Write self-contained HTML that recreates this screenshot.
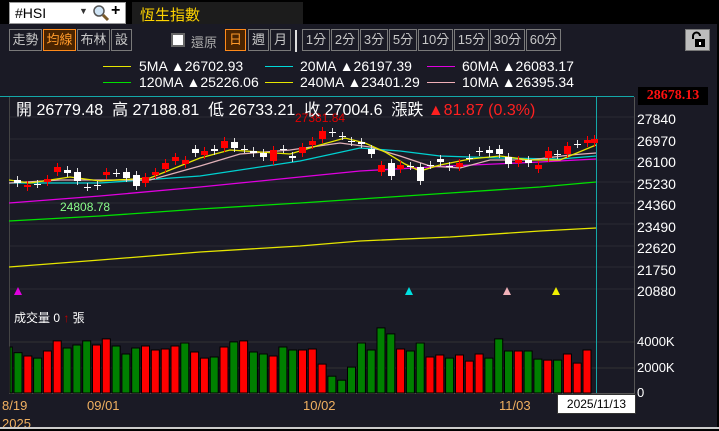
<!DOCTYPE html>
<html><head><meta charset="utf-8"><style>
*{margin:0;padding:0;box-sizing:border-box}
body{width:719px;height:429px;background:#000;overflow:hidden;font-family:"Liberation Sans","Noto Sans CJK TC",sans-serif;position:relative}
.main{position:absolute;left:0;top:24px;width:717px;height:405px;background:#1a1a25}
.a{position:absolute;white-space:nowrap}
.btn{position:absolute;top:29px;height:22px;border:1px solid #7a7a7a;color:#c8c8c8;font-size:13px;line-height:20px;text-align:center;font-family:"Liberation Sans","Noto Sans CJK TC",sans-serif}
.on{border-color:#ff8a1a;background:#4a2400;color:#ff9a2a}
.lg{position:absolute;height:1px}
.lt{position:absolute;color:#fff;font-size:14px;line-height:14px}
</style></head><body>
<div class="main"></div>
<div class="a" style="left:9px;top:2px;width:117px;height:22px;background:#fff;border:1px solid #999"></div>
<div class="a" style="left:15px;top:5px;font-size:14px;color:#000">#HSI</div>
<div class="a" style="left:79px;top:6px;font-size:9px;color:#333">▼</div>
<svg class="a" style="left:92px;top:4px" width="18" height="18"><circle cx="7" cy="7" r="5" fill="#cfe4f5" stroke="#555" stroke-width="1.5"/><path d="M11 11 L16 16" stroke="#7a5a2a" stroke-width="3"/></svg>
<div class="a" style="left:111px;top:2px;font-size:16px;font-weight:bold;color:#000">+</div>
<div class="a" style="left:132px;top:2px;width:171px;height:22px;background:#1c1c1c"></div>
<div class="a" style="left:140px;top:4px;font-size:15px;color:#ffd400">恆生指數</div>

<div class="btn" style="left:9px;width:33px">走勢</div>
<div class="btn on" style="left:43px;width:33px">均線</div>
<div class="btn" style="left:77px;width:33px">布林</div>
<div class="btn" style="left:111px;width:21px">設</div>
<div class="a" style="left:171px;top:33px;width:14px;height:14px;background:#fff;border:2px solid #666"></div>
<div class="a" style="left:191px;top:32px;font-size:13px;color:#aaa">還原</div>
<div class="btn on" style="left:225px;width:21px">日</div>
<div class="btn" style="left:248px;width:21px">週</div>
<div class="btn" style="left:270px;width:21px">月</div>
<div class="a" style="left:295px;top:30px;width:2px;height:22px;background:#ddd"></div>
<div class="btn" style="left:302px;width:28px">1分</div>
<div class="btn" style="left:331px;width:28px">2分</div>
<div class="btn" style="left:360px;width:28px">3分</div>
<div class="btn" style="left:389px;width:28px">5分</div>
<div class="btn" style="left:418px;width:35px">10分</div>
<div class="btn" style="left:454px;width:35px">15分</div>
<div class="btn" style="left:490px;width:35px">30分</div>
<div class="btn" style="left:526px;width:35px">60分</div>
<div class="a" style="left:685px;top:29px;width:25px;height:22px;background:#bdbdbd;border:1px solid #777"></div>
<svg class="a" style="left:690px;top:31px" width="16" height="18"><path d="M3 8 V5 A3.5 3.5 0 0 1 10 5" stroke="#000" stroke-width="2" fill="none"/><rect x="5" y="8" width="10" height="8" fill="#000"/><rect x="9" y="11" width="2" height="3" fill="#fff"/></svg>

<div class="lg" style="left:103px;top:66px;width:28px;background:#e6e600"></div><div class="lt" style="left:139px;top:59px">5MA ▲26702.93</div>
<div class="lg" style="left:265px;top:66px;width:28px;background:#00d8d8"></div><div class="lt" style="left:300px;top:59px">20MA ▲26197.39</div>
<div class="lg" style="left:427px;top:66px;width:28px;background:#e000e0"></div><div class="lt" style="left:462px;top:59px">60MA ▲26083.17</div>
<div class="lg" style="left:103px;top:82px;width:28px;background:#00e000"></div><div class="lt" style="left:139px;top:75px">120MA ▲25226.06</div>
<div class="lg" style="left:265px;top:82px;width:28px;background:#e6e600"></div><div class="lt" style="left:300px;top:75px">240MA ▲23401.29</div>
<div class="lg" style="left:427px;top:82px;width:28px;background:#f0b0b8"></div><div class="lt" style="left:462px;top:75px">10MA ▲26395.34</div>

<div class="a" style="left:638px;top:87px;width:70px;height:18px;background:#000;color:#ff1010;font-weight:bold;font-size:14px;line-height:18px;text-align:center;font-family:'Liberation Serif',serif">28678.13</div>

<svg class="a" style="left:0;top:0" width="719" height="429">
<g stroke="#2a2a32" stroke-width="1">
<line x1="9" y1="117" x2="634" y2="117"/><line x1="9" y1="139" x2="634" y2="139"/><line x1="9" y1="160" x2="634" y2="160"/><line x1="9" y1="182" x2="634" y2="182"/><line x1="9" y1="203" x2="634" y2="203"/><line x1="9" y1="224" x2="634" y2="224"/><line x1="9" y1="246" x2="634" y2="246"/><line x1="9" y1="267" x2="634" y2="267"/><line x1="9" y1="289" x2="634" y2="289"/>
<line x1="9" y1="342" x2="634" y2="342" stroke="#333"/><line x1="9" y1="368" x2="634" y2="368" stroke="#333"/>
</g>
<line x1="9.5" y1="97" x2="9.5" y2="393" stroke="#444"/>
<line x1="634.5" y1="97" x2="634.5" y2="395" stroke="#555"/>
<line x1="9" y1="393.5" x2="634" y2="393.5" stroke="#555"/>
<line x1="0" y1="96.5" x2="634" y2="96.5" stroke="#14a8a8"/>
<line x1="596.5" y1="96" x2="596.5" y2="393" stroke="#14a8a8"/>
<g fill="none" stroke-width="1.3">
<polyline stroke="#e6e600" points="9,267 100,260 200,252 300,246 360,241 450,237 540,231 596,228"/>
<polyline stroke="#00e000" points="9,221 100,216 200,209 300,203 360,199 450,193 540,187 596,182"/>
<polyline stroke="#e000e0" points="9,203 100,196 200,187 300,177 360,171 450,166 540,162 596,159"/>
<polyline stroke="#00d0d0" points="9,183 100,183 200,176 300,161 360,148 400,151 440,156 500,158 560,159 596,156"/>
<polyline stroke="#e0b0b8" points="9,183 60,180 100,180 150,180 200,166 240,154 290,150 340,143 370,147 400,156 430,166 460,168 490,160 530,160 570,155 596,153"/>
<polyline stroke="#e6e600" points="9,180 30,183 70,177 100,181 150,178 200,158 230,150 290,154 320,145 345,138 365,143 385,152 405,164 420,171 440,165 470,159 500,156 530,160 560,160 596,145"/>
</g>
<text x="295" y="122" fill="#e00000" font-size="12" font-family="Liberation Sans">27381.84</text>
<text x="60" y="211" fill="#8aff8a" font-size="12" font-family="Liberation Sans">24808.78</text>
<polygon points="14,295 18,287 22,295" fill="#e000e0"/>
<polygon points="405,295 409,287 413,295" fill="#00e0e0"/>
<polygon points="503,295 507,287 511,295" fill="#f0b0b8"/>
<polygon points="552,295 556,287 560,295" fill="#f0f000"/>
</svg>
<svg class="a" style="left:0;top:0" width="719" height="429" id="cs"></svg>

<div class="a" style="left:16px;top:96px;font-size:16px;color:#fff">開 26779.48&nbsp; 高 27188.81&nbsp; 低 26733.21&nbsp; 收 27004.6&nbsp; 漲跌 <span style="color:#ff2020">▲81.87 (0.3%)</span></div>
<div class="a" style="left:637px;top:109px;font-size:14px;color:#fff;line-height:21.5px">27840<br>26970<br>26100<br>25230<br>24360<br>23490<br>22620<br>21750<br>20880</div>
<div class="a" style="left:637px;top:334px;font-size:13px;color:#fff">4000K</div>
<div class="a" style="left:637px;top:360px;font-size:13px;color:#fff">2000K</div>
<div class="a" style="left:637px;top:385px;font-size:13px;color:#fff">0</div>
<div class="a" style="left:14px;top:309px;font-size:12px;color:#fff">成交量 0 <span style="color:#c00000">↑</span> 張</div>
<div class="a" style="left:2px;top:398px;font-size:13px;color:#f0b060">8/19</div>
<div class="a" style="left:2px;top:416px;font-size:13px;color:#f0b060">2025</div>
<div class="a" style="left:87px;top:398px;font-size:13px;color:#f0b060">09/01</div>
<div class="a" style="left:303px;top:398px;font-size:13px;color:#f0b060">10/02</div>
<div class="a" style="left:499px;top:398px;font-size:13px;color:#f0b060">11/03</div>
<div class="a" style="left:557px;top:394px;width:79px;height:20px;background:#fff;border:1px solid #333;color:#000;font-size:12px;line-height:18px;text-align:center">2025/11/13</div>
<div class="a" style="left:0;top:427px;width:719px;height:2px;background:#ccc"></div>
<script>
var s='';
var vol=[[140,'G'],[157,'G'],[167,'R'],[173,'G'],[152,'R'],[122,'R'],[143,'G'],[134,'G'],[122,'G'],[134,'R'],[116,'R'],[137,'G'],[161,'G'],[143,'G'],[137,'R'],[149,'R'],[146,'R'],[137,'R'],[128,'G'],[155,'R'],[173,'R'],[170,'G'],[140,'R'],[125,'G'],[122,'R'],[155,'G'],[161,'G'],[167,'R'],[140,'G'],[149,'G'],[149,'R'],[146,'R'],[191,'R'],[227,'G'],[239,'G'],[200,'G'],[128,'G'],[149,'G'],[83,'G'],[101,'G'],[146,'R'],[152,'G'],[128,'G'],[170,'R'],[164,'R'],[173,'G'],[164,'R'],[182,'R'],[161,'R'],[173,'G'],[116,'G'],[152,'G'],[152,'R'],[152,'G'],[176,'G'],[179,'R'],[179,'G'],[161,'R'],[188,'R'],[149,'R']];
for(var i=0;i<vol.length;i++){var x=14+(i-1)*9.81;var y=300+vol[i][0]/2.98;var w=8;if(x<10){w-=10-x;x=10;}
s+='<rect x="'+x.toFixed(1)+'" y="'+y.toFixed(1)+'" width="'+w.toFixed(1)+'" height="'+(393-y).toFixed(1)+'" fill="'+(vol[i][1]=='R'?'#ff0000':'#008000')+'" stroke="#000" stroke-width="1"/>';}
var c=[[17,180,183,'W'],[27,185,187,'R'],[37,184,184,'W'],[47,179,182,'R'],[57,167,172,'R'],[67,170,173,'W'],[77,172,181,'W'],[87,187,187,'W'],[97,185,186,'W'],[106,172,175,'R'],[116,173,173,'W'],[126,172,178,'W'],[136,175,186,'W'],[145,177,183,'R'],[155,172,175,'R'],[165,163,169,'R'],[175,157,161,'R'],[185,160,164,'R'],[195,149,153,'W'],[204,151,155,'R'],[214,149,151,'W'],[224,141,148,'R'],[234,142,148,'W'],[244,149,149,'W'],[253,151,153,'W'],[263,153,157,'W'],[273,150,161,'R'],[283,149,149,'W'],[292,156,158,'W'],[302,147,153,'R'],[312,141,145,'R'],[322,131,139,'R'],[332,132,133,'W'],[342,136,136,'W'],[351,141,142,'W'],[361,142,144,'W'],[371,149,154,'W'],[381,165,172,'R'],[391,163,176,'W'],[400,165,169,'R'],[410,166,166,'W'],[420,167,181,'W'],[430,165,165,'W'],[440,159,162,'W'],[449,166,167,'W'],[459,163,167,'R'],[469,158,158,'W'],[479,151,152,'W'],[489,150,153,'W'],[499,149,154,'W'],[508,157,164,'W'],[518,160,163,'R'],[528,160,163,'W'],[538,165,169,'R'],[548,151,158,'R'],[557,154,155,'W'],[567,146,154,'R'],[577,144,144,'W'],[587,140,143,'R'],[594,139,143,'R']];
for(var j=0;j<c.length;j++){var k=c[j],col=k[3]=='R'?'#ff0000':'#ffffff';
s+='<line x1="'+(k[0]+.5)+'" y1="'+(k[1]-4)+'" x2="'+(k[0]+.5)+'" y2="'+(k[2]+4)+'" stroke="'+(k[3]=='R'?'#ff0000':'#ddd')+'"/>';
s+='<rect x="'+(k[0]-3)+'" y="'+k[1]+'" width="7" height="'+Math.max(1,k[2]-k[1])+'" fill="'+col+'"/>';}
document.getElementById('cs').innerHTML=s;
</script>
</body></html>
